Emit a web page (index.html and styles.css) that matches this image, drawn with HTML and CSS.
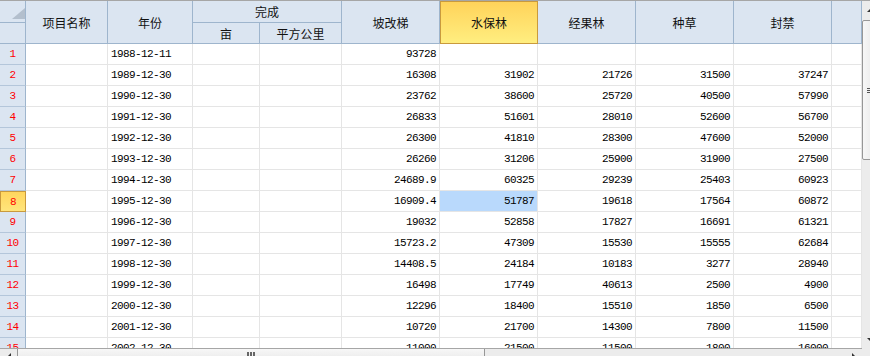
FILE: index.html
```html
<!DOCTYPE html>
<html lang="zh-CN">
<head>
    <meta charset="utf-8">
    <title>水土保持措施统计</title>
    <link rel="stylesheet" href="styles.css">
</head>
<body>
<div class="sheet">
    <div class="view">
        <div class="table">
            <!-- header -->
            <div class="hd corner"><span class="tri"></span></div>
            <div class="hd span-r">项目名称</div>
            <div class="hd span-r">年份</div>
            <div class="hd span-c">完成</div>
            <div class="hd span-r">坡改梯</div>
            <div class="hd span-r hot">水保林</div>
            <div class="hd span-r">经果林</div>
            <div class="hd span-r">种草</div>
            <div class="hd span-r">封禁</div>
            <div class="hd span-r"></div>
            <div class="hd"></div>
            <div class="hd">亩</div>
            <div class="hd">平方公里</div>

            <!-- rows -->
            <div class="rh">1</div><div class="c"></div><div class="c">1988-12-11</div><div class="c"></div><div class="c"></div><div class="c n">93728</div><div class="c n"></div><div class="c n"></div><div class="c n"></div><div class="c n"></div><div class="c"></div>
            <div class="rh">2</div><div class="c"></div><div class="c">1989-12-30</div><div class="c"></div><div class="c"></div><div class="c n">16308</div><div class="c n">31902</div><div class="c n">21726</div><div class="c n">31500</div><div class="c n">37247</div><div class="c"></div>
            <div class="rh">3</div><div class="c"></div><div class="c">1990-12-30</div><div class="c"></div><div class="c"></div><div class="c n">23762</div><div class="c n">38600</div><div class="c n">25720</div><div class="c n">40500</div><div class="c n">57990</div><div class="c"></div>
            <div class="rh">4</div><div class="c"></div><div class="c">1991-12-30</div><div class="c"></div><div class="c"></div><div class="c n">26833</div><div class="c n">51601</div><div class="c n">28010</div><div class="c n">52600</div><div class="c n">56700</div><div class="c"></div>
            <div class="rh">5</div><div class="c"></div><div class="c">1992-12-30</div><div class="c"></div><div class="c"></div><div class="c n">26300</div><div class="c n">41810</div><div class="c n">28300</div><div class="c n">47600</div><div class="c n">52000</div><div class="c"></div>
            <div class="rh">6</div><div class="c"></div><div class="c">1993-12-30</div><div class="c"></div><div class="c"></div><div class="c n">26260</div><div class="c n">31206</div><div class="c n">25900</div><div class="c n">31900</div><div class="c n">27500</div><div class="c"></div>
            <div class="rh">7</div><div class="c"></div><div class="c">1994-12-30</div><div class="c"></div><div class="c"></div><div class="c n">24689.9</div><div class="c n">60325</div><div class="c n">29239</div><div class="c n">25403</div><div class="c n">60923</div><div class="c"></div>
            <div class="rh cur">8</div><div class="c"></div><div class="c">1995-12-30</div><div class="c"></div><div class="c"></div><div class="c n">16909.4</div><div class="c n sel">51787</div><div class="c n">19618</div><div class="c n">17564</div><div class="c n">60872</div><div class="c"></div>
            <div class="rh">9</div><div class="c"></div><div class="c">1996-12-30</div><div class="c"></div><div class="c"></div><div class="c n">19032</div><div class="c n">52858</div><div class="c n">17827</div><div class="c n">16691</div><div class="c n">61321</div><div class="c"></div>
            <div class="rh">10</div><div class="c"></div><div class="c">1997-12-30</div><div class="c"></div><div class="c"></div><div class="c n">15723.2</div><div class="c n">47309</div><div class="c n">15530</div><div class="c n">15555</div><div class="c n">62684</div><div class="c"></div>
            <div class="rh">11</div><div class="c"></div><div class="c">1998-12-30</div><div class="c"></div><div class="c"></div><div class="c n">14408.5</div><div class="c n">24184</div><div class="c n">10183</div><div class="c n">3277</div><div class="c n">28940</div><div class="c"></div>
            <div class="rh">12</div><div class="c"></div><div class="c">1999-12-30</div><div class="c"></div><div class="c"></div><div class="c n">16498</div><div class="c n">17749</div><div class="c n">40613</div><div class="c n">2500</div><div class="c n">4900</div><div class="c"></div>
            <div class="rh">13</div><div class="c"></div><div class="c">2000-12-30</div><div class="c"></div><div class="c"></div><div class="c n">12296</div><div class="c n">18400</div><div class="c n">15510</div><div class="c n">1850</div><div class="c n">6500</div><div class="c"></div>
            <div class="rh">14</div><div class="c"></div><div class="c">2001-12-30</div><div class="c"></div><div class="c"></div><div class="c n">10720</div><div class="c n">21700</div><div class="c n">14300</div><div class="c n">7800</div><div class="c n">11500</div><div class="c"></div>
            <div class="rh">15</div><div class="c"></div><div class="c">2002-12-30</div><div class="c"></div><div class="c"></div><div class="c n">11000</div><div class="c n">21500</div><div class="c n">11500</div><div class="c n">1800</div><div class="c n">16000</div><div class="c"></div>
        </div>
    </div>

    <div class="vbar">
        <div class="vbar-in">
            <div class="btn"><span class="arr-up"></span></div>
            <div class="vthumb">
                <span class="grip-h"></span>
            </div>
            <div class="fill"></div>
            <div class="btn"><span class="arr-down"></span></div>
        </div>
    </div>

    <div class="hbar">
        <div class="btn"><span class="arr-left"></span></div>
        <div class="hthumb">
            <span class="grip-v"></span><span class="grip-v"></span><span class="grip-v"></span>
        </div>
        <div class="fill"></div>
        <div class="btn"><span class="arr-right"></span></div>
    </div>

    <div class="box"></div>
</div>
</body>
</html>
```

FILE: styles.css
```css
* {
    box-sizing: border-box;
}
body {
    margin: 0;
    font-family: "Liberation Mono", monospace;
    background: #fff;
}
.sheet {
    display: grid;
    grid-template-columns: 862px 8px;
    grid-template-rows: 347px 8px;
    width: 870px;
    border-top: 1px solid #a6a6a6;
    overflow: hidden;
}
.view {
    overflow: hidden;
}
.table {
    display: grid;
    grid-template-columns: 26px 82px 85px 67px 82px repeat(5, 98px) 30px;
    grid-template-rows: 22px 21px;
    grid-auto-rows: 21px;
}
.hd {
    display: flex;
    align-items: center;
    justify-content: center;
    background: #dbe5f1;
    border-right: 1px solid #9eb5cd;
    border-bottom: 1px solid #9eb5cd;
    font: 12px "Noto Sans CJK SC", sans-serif;
    color: #111;
}
.span-r {
    grid-row: span 2;
}
.span-c {
    grid-column: span 2;
}
.hd.hot {
    background: linear-gradient(#ffd35a, #ffee80);
    border: 1px solid #c99a3d;
}
.corner {
    justify-content: flex-end;
    align-items: flex-end;
    padding-bottom: 3px;
}
.tri {
    width: 0;
    height: 0;
    border-left: 13px solid transparent;
    border-bottom: 11px solid #b3bfcd;
}
.rh {
    display: flex;
    align-items: center;
    justify-content: center;
    background: #dbe5f1;
    border-right: 1px solid #9eb5cd;
    border-bottom: 1px solid #b4c6da;
    color: #f00;
    font-size: 11px;
    letter-spacing: -0.6px;
}
.rh.cur {
    background: linear-gradient(#ffd65e, #ffe57c);
    border: 1px solid #c99a3d;
}
.c {
    display: flex;
    align-items: center;
    padding: 0 3px;
    border-right: 1px solid #e5e5e5;
    border-bottom: 1px solid #e5e5e5;
    font-size: 11px;
    letter-spacing: -0.6px;
    color: #000;
    white-space: nowrap;
}
.n {
    justify-content: flex-end;
}
.sel {
    background: #b9d9fc;
}

/* scrollbars */
.vbar {
    overflow: hidden;
    background: #ececec;
}
.vbar-in {
    display: flex;
    flex-direction: column;
    width: 17px;
    height: 100%;
}
.btn {
    display: flex;
    align-items: center;
    justify-content: center;
    flex: 0 0 17px;
}
.fill {
    flex: 1;
}
.vthumb {
    display: flex;
    align-items: center;
    justify-content: center;
    height: 140px;
    margin-top: 2px;
    border: 1px solid #979797;
    border-radius: 2px;
    background: linear-gradient(to right, #f7f7f7, #e4e4e4);
}
.grip-h {
    width: 7px;
    height: 5px;
    border-top: 1px solid #555;
    border-bottom: 1px solid #555;
    background: linear-gradient(transparent 1px, #555 1px, #555 2px, transparent 2px);
}
.arr-up {
    border-left: 4px solid transparent;
    border-right: 4px solid transparent;
    border-bottom: 4px solid #333;
}
.arr-down {
    border-left: 4px solid transparent;
    border-right: 4px solid transparent;
    border-top: 4px solid #333;
}
.hbar {
    display: flex;
    height: 17px;
    background: #ececec;
    border-top: 1px solid #a6a6a6;
}
.hthumb {
    display: flex;
    justify-content: center;
    gap: 1px;
    width: 468px;
    padding-top: 3px;
    border-left: 1px solid #979797;
    border-right: 1px solid #979797;
    background: linear-gradient(#f7f7f7, #e4e4e4);
}
.grip-v {
    width: 2px;
    height: 7px;
    background: #666;
}
.arr-left {
    border-top: 4px solid transparent;
    border-bottom: 4px solid transparent;
    border-right: 4px solid #333;
}
.arr-right {
    border-top: 4px solid transparent;
    border-bottom: 4px solid transparent;
    border-left: 4px solid #333;
}
.box {
    background: #ececec;
}
```
